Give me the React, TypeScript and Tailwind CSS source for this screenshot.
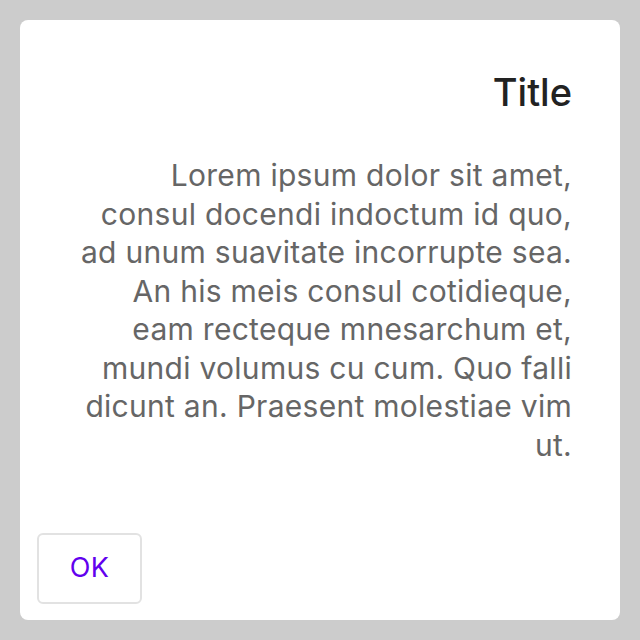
import React from 'react';

const lines = [
  'Lorem ipsum dolor sit amet,',
  'consul docendi indoctum id quo,',
  'ad unum suavitate incorrupte sea.',
  'An his meis consul cotidieque,',
  'eam recteque mnesarchum et,',
  'mundi volumus cu cum. Quo falli',
  'dicunt an. Praesent molestiae vim',
  'ut.',
];

export default function App() {
  return (
    <div className="w-[640px] h-[640px] bg-[#cccccc] p-5" style={{ fontFamily: 'Inter, "Noto Sans", sans-serif' }}>
      <div className="h-full bg-white rounded-lg flex flex-col">
        {/* Header */}
        <div className="pt-12 px-12 text-right">
          <h2 className="text-[38px] leading-[48px] font-medium text-[#222222]">Title</h2>
        </div>

        {/* Body */}
        <div className="pt-10 px-12 text-right">
          <p className="text-[30px] leading-[38.5px] tracking-[0.28px] text-[#666666]">
            {lines.map((l, i) => (
              <span key={i} className="block whitespace-nowrap">
                {l}
              </span>
            ))}
          </p>
        </div>

        {/* Actions */}
        <div className="mt-auto p-4 flex">
          <button className="ml-px w-[105px] h-[71px] border-2 border-[#e2e2e2] rounded-md text-[27px] tracking-[0.3px] text-[#6200ee]">
            OK
          </button>
        </div>
      </div>
    </div>
  );
}
